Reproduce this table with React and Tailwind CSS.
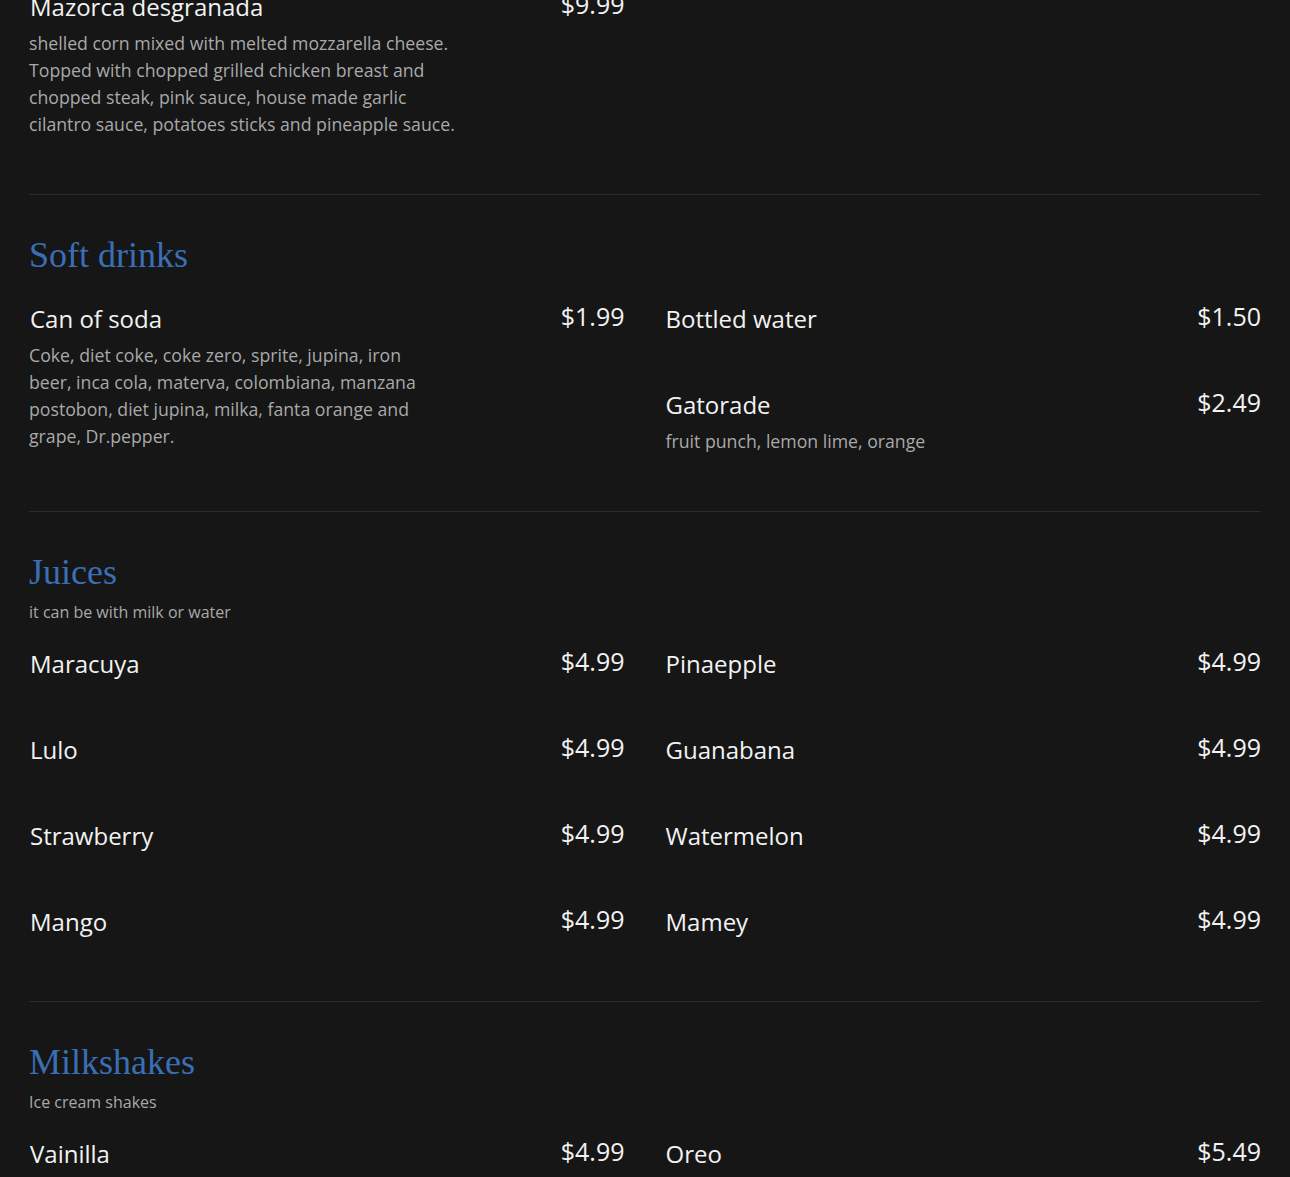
const sections = [
  {
    title: null,
    left: [
      {
        name: "Mazorca desgranada",
        price: "$9.99",
        desc: [
          "shelled corn mixed with melted mozzarella cheese.",
          "Topped with chopped grilled chicken breast and",
          "chopped steak, pink sauce, house made garlic",
          "cilantro sauce, potatoes sticks and pineapple sauce.",
        ],
      },
    ],
    right: [],
  },
  {
    title: "Soft drinks",
    left: [
      {
        name: "Can of soda",
        price: "$1.99",
        desc: [
          "Coke, diet coke, coke zero, sprite, jupina, iron",
          "beer, inca cola, materva, colombiana, manzana",
          "postobon, diet jupina, milka, fanta orange and",
          "grape, Dr.pepper.",
        ],
      },
    ],
    right: [
      { name: "Bottled water", price: "$1.50" },
      { name: "Gatorade", price: "$2.49", desc: ["fruit punch, lemon lime, orange"] },
    ],
  },
  {
    title: "Juices",
    subtitle: "it can be with milk or water",
    left: [
      { name: "Maracuya", price: "$4.99" },
      { name: "Lulo", price: "$4.99" },
      { name: "Strawberry", price: "$4.99" },
      { name: "Mango", price: "$4.99" },
    ],
    right: [
      { name: "Pinaepple", price: "$4.99" },
      { name: "Guanabana", price: "$4.99" },
      { name: "Watermelon", price: "$4.99" },
      { name: "Mamey", price: "$4.99" },
    ],
  },
  {
    title: "Milkshakes",
    subtitle: "Ice cream shakes",
    left: [{ name: "Vainilla", price: "$4.99" }],
    right: [{ name: "Oreo", price: "$5.49" }],
  },
];

function MenuItem({ item, first }) {
  return (
    <div className="pb-[47.5px]">
      <div className="flex items-start justify-between mb-[6.5px]">
        <h3 className={"text-[24px] leading-[32px] text-[#f2f2f2] " + (first ? "pl-px" : "")}>{item.name}</h3>
        <span className="text-[25px] leading-[26px] text-[#f2f2f2]">{item.price}</span>
      </div>
      {item.desc && (
        <p className="text-[17.7px] leading-[27px] text-[#a9a9a9]">
          {item.desc.map((line, i) => (
            <span key={i} className="block">{line}</span>
          ))}
        </p>
      )}
    </div>
  );
}

export default function App() {
  return (
    <div
      className="h-[1177px] overflow-hidden bg-[#161616] px-[29px]"
      style={{ fontFamily: '"Open Sans", "Noto Sans", sans-serif' }}
    >
      <div className="-mt-[9px]">
        {sections.map((section, i) => (
          <section
            key={i}
            className={
              "pb-[9px] border-b border-[#2b2b2b] " + (section.title ? "pt-[38px]" : "")
            }
          >
            {section.title && (
              <div className={section.subtitle ? "mb-[24px]" : "mb-[26px]"}>
                <h2
                  className="text-[36px] leading-[44px] text-[#3a6fb6]"
                  style={{ fontFamily: '"Liberation Serif", serif' }}
                >
                  {section.title}
                </h2>
                {section.subtitle && (
                  <p className="mt-[6px] text-[16px] leading-[24px] text-[#a9a9a9]">{section.subtitle}</p>
                )}
              </div>
            )}
            <div className="grid grid-cols-2 gap-x-[41px]">
              <div>
                {section.left.map((item) => (
                  <MenuItem key={item.name} item={item} first />
                ))}
              </div>
              <div>
                {section.right.map((item) => (
                  <MenuItem key={item.name} item={item} />
                ))}
              </div>
            </div>
          </section>
        ))}
      </div>
    </div>
  );
}
